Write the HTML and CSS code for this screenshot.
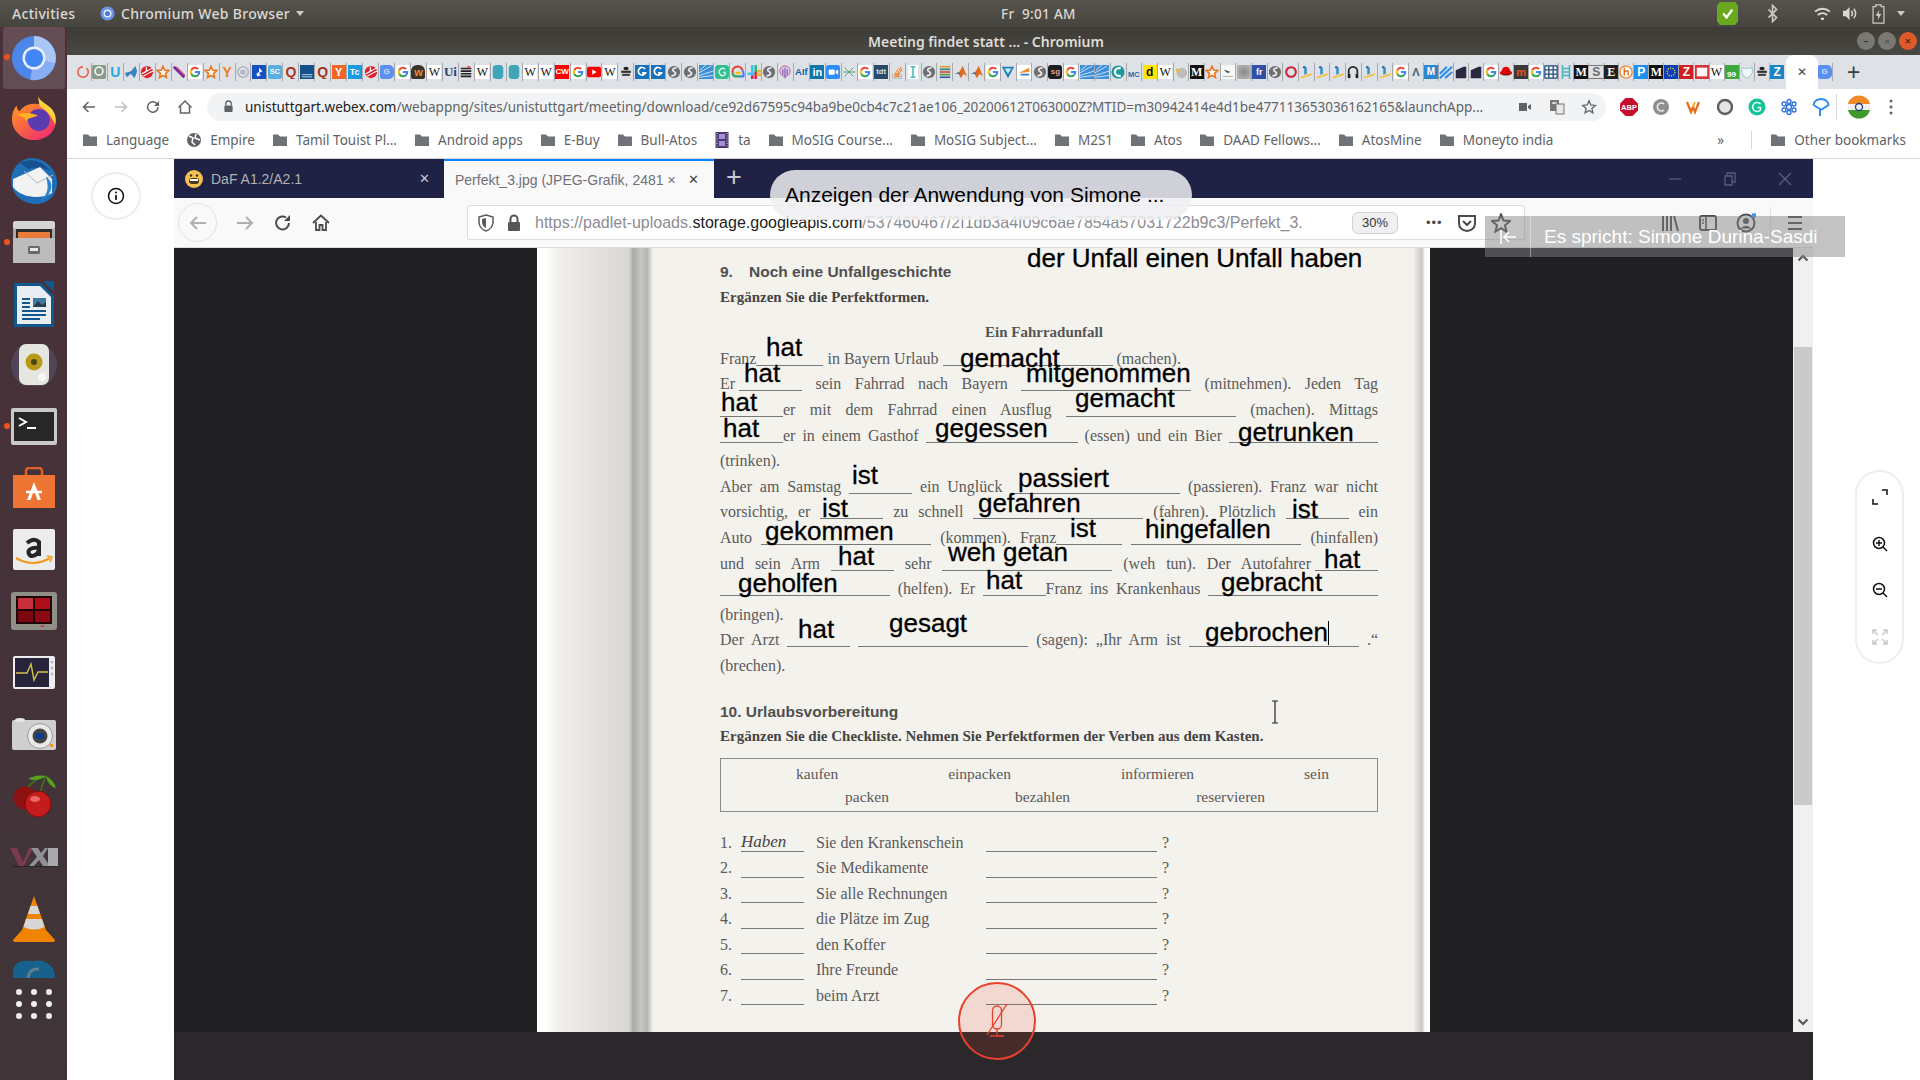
FILE: index.html
```html
<!DOCTYPE html>
<html lang="en">
<head>
  <meta charset="UTF-8">
  <title>Meeting findet statt ... - Chromium</title>
  <link rel="stylesheet" href="styles.css">
</head>
<body>
  <!-- shared favicon shapes -->
  <svg class="sprite" aria-hidden="true">
    <symbol id="goog" viewBox="0 0 16 16"><rect width="16" height="16" rx="2" fill="#fff"/><g fill="none" stroke-width="2.4"><path d="M3.8 5.8A4.8 4.8 0 0 1 11.5 4.6" stroke="#ea4335"/><path d="M3.8 5.8A4.8 4.8 0 0 0 3.8 10.2" stroke="#fbbc05"/><path d="M3.8 10.2A4.8 4.8 0 0 0 11.5 11.5" stroke="#34a853"/><path d="M11.5 11.5A4.8 4.8 0 0 0 12.8 8H8" stroke="#4285f4"/></g></symbol>
    <symbol id="globe" viewBox="0 0 16 16"><circle cx="8" cy="8" r="7" fill="#6d6f72"/><path d="M11 3.2C7 3 5 5.500 8 7.500S10 12 5 12.500" fill="none" stroke="#e8e8e8" stroke-width="2"/></symbol>
    <symbol id="star" viewBox="0 0 16 16"><path d="M8 1.500 9.800 5.800 14.500 6.300 11 9.500 12 14.300 8 11.800 4 14.300 5 9.500 1.500 6.300 6.200 5.800Z" fill="#fff6ea" stroke="#e8771f" stroke-width="1.800"/></symbol>
    <symbol id="ball" viewBox="0 0 16 16"><circle cx="8" cy="8" r="7" fill="#d9232f"/><path d="M2 10C7 8 10 5 14 4M3 13C8 11 11 8 15 7M7 2C8 5 8 6 6 8" fill="none" stroke="#fff" stroke-width="1.200"/></symbol>
    <symbol id="py" viewBox="0 0 16 16"><path d="M1 14 15 9 14 12 3 15Z" fill="#f0c040"/><path d="M6 2 9 3 9 10 6 11Z" fill="#3a8fd0"/><circle cx="6" cy="2.500" r="1.500" fill="#1c6fb0"/></symbol>
    <symbol id="rays" viewBox="0 0 16 16"><rect width="16" height="16" fill="#3f8fd8"/><path d="M0 14 16 12M0 12 16 7M0 9 14 1M1 6 8 0" stroke="#d8ecfa" stroke-width="1"/></symbol>
    <symbol id="doc" viewBox="0 0 16 16"><path d="M2 6 11 2H14V15H2Z" fill="#2b2740"/></symbol>
    <symbol id="folder" viewBox="0 0 16 16"><path d="M1 2.500H6L8 4.500H15V14H1Z" fill="#6f7276"/></symbol>
    <symbol id="pill" viewBox="0 0 16 16"><rect x="2" width="12" height="16" rx="4" fill="#3fa5b8"/></symbol>
    <symbol id="bee" viewBox="0 0 16 16"><ellipse cx="8" cy="4" rx="3" ry="2" fill="#222"/><rect x="2.500" y="6.500" width="11" height="2.500" fill="#333"/><rect x="3.500" y="10" width="9" height="2.500" fill="#444"/></symbol>
    <symbol id="gblue" viewBox="0 0 16 16"><rect width="16" height="16" fill="#1672bd"/><path d="M11.500 4.500A4.300 4.300 0 1 0 12 9H8" fill="none" stroke="#fff" stroke-width="2"/></symbol>
    <symbol id="matlab" viewBox="0 0 16 16"><path d="M1 10 6 8 10 1 15 13 11 10 8 15 5 10Z" fill="#e06a1a"/><path d="M1 10 6 8 8 11 5 10Z" fill="#3f78b8"/></symbol>
  </svg>

  <header class="topbar">
    <span class="activities">Activities</span>
    <span class="appmenu">
      <svg class="appmenu-ico" viewBox="0 0 16 16"><circle cx="8" cy="8" r="7.500" fill="#6b94e6"/><circle cx="8" cy="8" r="3.500" fill="#4a7fe0" stroke="#e6eefc" stroke-width="1.500"/></svg>
      Chromium Web Browser
      <i class="caret"></i>
    </span>
    <span class="clock">Fr &nbsp;9:01 AM</span>
    <span class="tray">
      <svg class="tray-check" viewBox="0 0 22 24"><path d="M3 0H19L22 4V20L19 24H3L0 20V4Z" fill="#6aa81e"/><path d="M6.500 12 10 16 16 8" fill="none" stroke="#fff" stroke-width="2.400"/></svg>
      <svg class="tray-bt" viewBox="0 0 16 22"><path d="M3 6 13 16 8 21V1L13 6 3 16" fill="none" stroke="#c9c7c1" stroke-width="2"/></svg>
      <svg class="tray-wifi" viewBox="0 0 18 16"><path d="M1 6A12 12 0 0 1 17 6M4 9.500A8 8 0 0 1 14 9.500" fill="none" stroke="#d9d7d2" stroke-width="2"/><path d="M7 12.500H11L10 15H8Z" fill="#e8e6e2"/></svg>
      <svg class="tray-vol" viewBox="0 0 18 16"><path d="M1 5H4L8 1V15L4 11H1Z" fill="#d9d7d2"/><path d="M10 5C11.500 7 11.500 9 10 11M12.500 3C15 6 15 10 12.500 13" fill="none" stroke="#d9d7d2" stroke-width="1.600"/></svg>
      <svg class="tray-bat" viewBox="0 0 14 22"><path d="M4 1H10V3H13V21H1V3H4Z" fill="none" stroke="#c9c7c1" stroke-width="1.400"/><path d="M8 6 4 13H7L6 18 10 11H7Z" fill="#d9d7d2"/></svg>
      <i class="caret"></i>
    </span>
  </header>

  <div class="desk">
    <nav class="dock">
      <a class="dock-item active">
        <svg width="46" height="46" viewBox="0 0 48 48"><circle cx="24" cy="24" r="23" fill="#4b86e8"/><path d="M24 1A23 23 0 0 1 46 30L24 24Z" fill="#a9c6f7"/><path d="M46 30A23 23 0 0 1 20 47L24 24Z" fill="#88aff3"/><circle cx="24" cy="24" r="12" fill="#e9f0fd"/><circle cx="24" cy="24" r="9.500" fill="#4285f4"/></svg>
      </a>
      <a class="dock-item">
        <svg width="46" height="46" viewBox="0 0 48 48"><defs><linearGradient id="fx" x1="0" y1="0" x2="1" y2="1"><stop offset="0" stop-color="#ff9a1f"/><stop offset="1" stop-color="#f01f78"/></linearGradient></defs><path d="M24 46C11 46 1 36 1 24C1 18 3 13 6 10C6 13 7 15 9 16C12 11 18 8 24 8C34 8 47 12 47 25C47 37 37 46 24 46Z" fill="url(#fx)"/><path d="M28 0C30 6 38 8 43 14C47 20 47 26 46 30C42 20 36 14 30 11Z" fill="#ffd43a"/><circle cx="29" cy="25" r="11.500" fill="#5a3bb0"/><path d="M6 20C14 16 22 18 28 20C24 23 18 22 16 26C14 22 10 20 6 20Z" fill="#ffb31f"/></svg>
      </a>
      <a class="dock-item">
        <svg width="48" height="48" viewBox="0 0 48 48"><path d="M20 1C34 0 47 12 47 26C47 38 38 47 26 47C14 47 1 38 1 24C1 12 9 3 20 1Z" fill="#1f6fb8"/><path d="M10 6C20 0 34 4 40 14C34 10 24 10 18 12Z" fill="#17508e"/><path d="M3 22 30 10 42 22 42 36C32 42 12 42 3 30Z" fill="#f3f3f3"/><path d="M14 14 27 26 43 18" fill="none" stroke="#b5b5b5" stroke-width="1"/><path d="M36 20C44 24 44 38 30 44C40 36 38 28 36 20Z" fill="#2e86cf"/></svg>
      </a>
      <a class="dock-item">
        <svg width="42" height="42" viewBox="0 0 42 42"><rect width="42" height="42" rx="3" fill="#a9a9a7"/><rect width="42" height="8" rx="3" fill="#d5d5d3"/><rect x="3" y="8" width="36" height="9" fill="#2b2b2b"/><rect x="5" y="11" width="32" height="7" fill="#ec7a3a"/><rect x="0" y="17" width="42" height="25" fill="#bcbcba"/><rect x="15" y="25" width="12" height="8" rx="1.500" fill="#6a6a6a"/><rect x="17" y="27" width="8" height="3" fill="#e8e8e8"/></svg>
      </a>
      <a class="dock-item">
        <svg width="40" height="46" viewBox="0 0 40 46"><path d="M0 2H27L40 15V46H0Z" fill="#10588f"/><path d="M3 5H26L37 16V43H3Z" fill="#e9eef2"/><path d="M29 0H40V11Z" fill="#10588f"/><path d="M8 18H16M8 22H16M8 26H16M8 30H32M8 34H32M8 38H26" stroke="#10588f" stroke-width="1.800"/><rect x="19" y="17" width="13" height="9" fill="#3e7aa8"/><path d="M19 26 24 20 28 24 32 21V26Z" fill="#2b3d4a"/></svg>
      </a>
      <a class="dock-item">
        <svg width="48" height="42" viewBox="0 0 48 42"><circle cx="24" cy="21" r="23" fill="#5a5470" opacity=".55"/><rect x="9" y="0" width="30" height="41" rx="7" fill="#e6e6e0"/><circle cx="24" cy="18" r="8.500" fill="#b89a18"/><circle cx="24" cy="18" r="3" fill="#4a4510"/><circle cx="32" cy="33" r="4" fill="#f6f6f2"/></svg>
      </a>
      <a class="dock-item">
        <svg width="46" height="37" viewBox="0 0 46 37"><rect width="46" height="37" rx="2" fill="#c9c9c7"/><rect x="3" y="4" width="40" height="29" fill="#272727"/><path d="M8 10 15 14 8 18" fill="none" stroke="#fff" stroke-width="2"/><path d="M16 20H25" stroke="#fff" stroke-width="2"/></svg>
      </a>
      <a class="dock-item">
        <svg width="42" height="42" viewBox="0 0 42 42"><path d="M13 8V4Q13 1 16 1H26Q29 1 29 4V8" fill="none" stroke="#d8622a" stroke-width="2.500"/><path d="M0 8H42V41H0Z" fill="#ee7434"/><path d="M21 15 28 33H24.500L21 23 17.500 33H14Z" fill="#fff"/><path d="M13 25H29" stroke="#fff" stroke-width="2.500"/></svg>
      </a>
      <a class="dock-item">
        <svg width="42" height="41" viewBox="0 0 42 41"><rect width="42" height="41" rx="2" fill="#ececec"/><path d="M14 14Q21 8 26 13V27M26 19C18 18 14 21 16 25S25 26 26 21" fill="none" stroke="#262626" stroke-width="4"/><path d="M3 29Q20 39 37 29" fill="none" stroke="#f19a1c" stroke-width="2.200"/><path d="M34 27 39 28 37 33" fill="none" stroke="#f19a1c" stroke-width="1.500"/></svg>
      </a>
      <a class="dock-item">
        <svg width="46" height="38" viewBox="0 0 46 38"><rect width="46" height="38" rx="3" fill="#8f8f88"/><rect x="5" y="4" width="36" height="28" fill="#1d0508"/><rect x="7" y="6" width="15" height="11" fill="#c9313a"/><rect x="24" y="6" width="15" height="11" fill="#b00e18"/><rect x="7" y="19" width="15" height="11" fill="#7c0710"/><rect x="24" y="19" width="15" height="11" fill="#8f0812"/><rect x="30" y="33" width="3" height="2" fill="#e33"/></svg>
      </a>
      <a class="dock-item">
        <svg width="42" height="33" viewBox="0 0 42 33"><rect width="42" height="33" rx="2" fill="#eee"/><rect x="2" y="2" width="34" height="29" fill="#27233a"/><path d="M3 17H14L18 8 21 24 25 16H35" fill="none" stroke="#d8c24a" stroke-width="1.400"/><circle cx="39" cy="6" r="1.500" fill="#bbb"/><circle cx="39" cy="12" r="1.500" fill="#bbb"/><circle cx="39" cy="18" r="1.500" fill="#bbb"/></svg>
      </a>
      <a class="dock-item">
        <svg width="44" height="32" viewBox="0 0 44 32"><rect y="2" width="44" height="30" rx="2" fill="#cfcfcf"/><ellipse cx="8" cy="2" rx="5" ry="2" fill="#e6e6e6"/><circle cx="28" cy="18" r="12.500" fill="#e9e9e9" stroke="#999"/><circle cx="28" cy="18" r="7.500" fill="#444"/><rect x="24" y="15" width="8" height="6" fill="#0c3d8a"/><rect x="38" y="26" width="3" height="3" fill="#e89a2a"/></svg>
      </a>
      <a class="dock-item">
        <svg width="44" height="44" viewBox="0 0 44 44"><path d="M14 16Q22 4 34 2M28 20Q30 10 34 2" fill="none" stroke="#3c7a18" stroke-width="1.600"/><path d="M16 5Q24 0 34 2Q26 8 16 5Z" fill="#58a020"/><path d="M34 2Q42 6 44 14Q36 12 34 2Z" fill="#58a020"/><circle cx="13" cy="24" r="11.500" fill="#8c1212"/><circle cx="26" cy="30" r="13" fill="#c41c1c" stroke="#7d0d0d"/><ellipse cx="23" cy="25" rx="5" ry="3" fill="#e66"/></svg>
      </a>
      <a class="dock-item">
        <svg width="48" height="20" viewBox="0 0 48 20"><path d="M0 1H7L13 15 19 1H23L14 19H9Z" fill="#7a3a52"/><path d="M19 19 27 10 21 1H28L31 6 35 1H38L33 9 40 19H33L29 13 24 19Z" fill="#8f9195"/><path d="M38 1H43V19H38ZM43 1H48V19H43Z" fill="#a8a8ad"/><path d="M2 20H47" stroke="#222" stroke-width="1.500"/></svg>
      </a>
      <a class="dock-item">
        <svg width="42" height="46" viewBox="0 0 42 46"><path d="M21 0 33 34 42 44Q42 46 40 46H2Q0 46 0 44L9 34Z" fill="#f08400"/><path d="M17.500 10H24.500L27 18H15ZM13 23H29L31.500 31Q21 36 10.500 31Z" fill="#d7d7d7"/></svg>
      </a>
      <a class="dock-item skype">
        <svg width="42" height="18" viewBox="0 0 42 18"><path d="M0 18V14Q0 1 12 1Q15 0 20 1Q30-1 38 6Q42 10 42 18Z" fill="#17618d"/><path d="M15 18Q16 8 26 9" fill="none" stroke="#5f7f93" stroke-width="3"/></svg>
      </a>
      <a class="dock-grid">
        <i></i><i></i><i></i><i></i><i></i><i></i><i></i><i></i><i></i>
      </a>
    </nav>

    <main class="browser">
      <div class="titlebar">
        <span class="wintitle">Meeting findet statt ... - Chromium</span>
        <span class="winbtns">
          <i class="winbtn">–</i><i class="winbtn">▫</i><i class="winbtn closebtn">×</i>
        </span>
      </div>

      <div class="tabstrip">
        <div class="tabs tabs-a">
          <span class="t"><svg class="fi" viewBox="0 0 16 16"><path d="M8 2A6 6 0 1 0 12 3.500" fill="none" stroke="#e8593a" stroke-width="1.600"/></svg></span>
          <span class="t"><svg class="fi" viewBox="0 0 16 16"><rect width="16" height="16" rx="2" fill="#8b9a88"/><circle cx="8" cy="7" r="4.500" fill="none" stroke="#eee" stroke-width="2"/></svg></span>
          <span class="t"><b class="fl cyan">U</b></span>
          <span class="t"><svg class="fi" viewBox="0 0 16 16"><path d="M1 9 8 7 13 1 15 7 12 15 8 10 3 14Z" fill="#3b82c4"/></svg></span>
          <span class="t"><svg class="fi"><use href="#ball"/></svg></span>
          <span class="t"><svg class="fi"><use href="#star"/></svg></span>
          <span class="t"><svg class="fi" viewBox="0 0 16 16"><path d="M2 2 14 14" stroke="#7a2aa0" stroke-width="3"/><path d="M5 2 15 12" stroke="#d83050" stroke-width="1.200"/></svg></span>
          <span class="t"><svg class="fi"><use href="#goog"/></svg></span>
          <span class="t"><svg class="fi"><use href="#star"/></svg></span>
          <span class="t"><b class="fl orange big">Y</b></span>
          <span class="t"><svg class="fi" viewBox="0 0 16 16"><circle cx="8" cy="8" r="7" fill="#b4bac6"/><circle cx="8" cy="8" r="4" fill="none" stroke="#e8eaee" stroke-width="1.500"/></svg></span>
          <span class="t"><svg class="fi" viewBox="0 0 16 16"><rect width="16" height="16" fill="#1452c4"/><path d="M8 3 12 7 8 9 10 12 6 13 5 10 8 8Z" fill="#fff"/></svg></span>
          <span class="t"><b class="fl sc">SC</b></span>
          <span class="t"><b class="fl qred big">Q</b></span>
          <span class="t"><svg class="fi" viewBox="0 0 16 16"><rect width="16" height="16" fill="#14508c"/><path d="M2 11H14M2 13.500H14" stroke="#cfe0ee" stroke-width="1"/></svg></span>
          <span class="t"><b class="fl qred big">Q</b></span>
          <span class="t"><b class="fl ybox">Y</b></span>
          <span class="t"><b class="fl tc">Tc</b></span>
          <span class="t"><svg class="fi"><use href="#ball"/></svg></span>
          <span class="t"><b class="fl gtr">G</b></span>
          <span class="t"><svg class="fi"><use href="#goog"/></svg></span>
          <span class="t"><b class="fl wbrown">w</b></span>
          <span class="t"><b class="fl wiki">W</b></span>
          <span class="t"><b class="fl uibox">Ui</b></span>
          <span class="t"><svg class="fi" viewBox="0 0 16 16"><path d="M2 4H14M2 7H14M2 10H14M2 13H14" stroke="#222" stroke-width="1.800"/><path d="M11 1V4" stroke="#d33" stroke-width="2"/></svg></span>
          <span class="t"><b class="fl wiki">W</b></span>
          <span class="t"><svg class="fi"><use href="#pill"/></svg></span>
          <span class="t"><svg class="fi"><use href="#pill"/></svg></span>
          <span class="t"><b class="fl wiki">W</b></span>
          <span class="t"><b class="fl wiki">W</b></span>
          <span class="t"><b class="fl cw">CW</b></span>
          <span class="t"><svg class="fi"><use href="#goog"/></svg></span>
          <span class="t"><svg class="fi" viewBox="0 0 16 16"><rect y="2" width="16" height="12" rx="2" fill="#f00"/><path d="M6 5 11 8 6 11Z" fill="#fff"/></svg></span>
          <span class="t"><b class="fl wiki">W</b></span>
          <span class="t"><svg class="fi"><use href="#bee"/></svg></span>
          <span class="t"><svg class="fi"><use href="#gblue"/></svg></span>
          <span class="t"><svg class="fi"><use href="#gblue"/></svg></span>
          <span class="t"><svg class="fi"><use href="#globe"/></svg></span>
          <span class="t"><svg class="fi"><use href="#globe"/></svg></span>
          <span class="t"><svg class="fi"><use href="#rays"/></svg></span>
          <span class="t"><svg class="fi" viewBox="0 0 16 16"><rect width="16" height="16" rx="4" fill="#30c08f"/><path d="M11.500 5A4 4 0 1 0 11.500 11V8.500H9" fill="none" stroke="#e8fbf3" stroke-width="1.500"/></svg></span>
          <span class="t"><svg class="fi" viewBox="0 0 16 16"><path d="M2 9A5.500 5.500 0 0 1 13 6" fill="none" stroke="#ea4335" stroke-width="2.500"/><path d="M13 6Q15 9 14 13H9" fill="none" stroke="#4285f4" stroke-width="2.500"/><path d="M2 9Q2 13 6 13H9" fill="none" stroke="#34a853" stroke-width="2.500"/><path d="M5 9H11" stroke="#fbbc05" stroke-width="2.500"/></svg></span>
          <span class="t"><svg class="fi" viewBox="0 0 16 16"><path d="M6 1V7M2 10H8" stroke="#36c5f0" stroke-width="3" stroke-linecap="round"/><path d="M10 1V7" stroke="#2eb67d" stroke-width="3" stroke-linecap="round"/><path d="M6 13V15M10 9V15" stroke="#e01e5a" stroke-width="3" stroke-linecap="round"/><path d="M13 7H15M12 11H15" stroke="#ecb22e" stroke-width="3" stroke-linecap="round"/></svg></span>
          <span class="t"><svg class="fi"><use href="#globe"/></svg></span>
          <span class="t"><svg class="fi" viewBox="0 0 16 16"><circle cx="8" cy="7" r="6" fill="#d8c8e8" stroke="#c25a7a"/><path d="M8 3V15M5.500 5V11M10.500 5V11" stroke="#7a58b8" stroke-width="1.300"/></svg></span>
          <span class="t"><b class="fl aif">AIf</b></span>
          <span class="t"><b class="fl linkedin">in</b></span>
          <span class="t"><svg class="fi" viewBox="0 0 16 16"><rect width="16" height="16" rx="3" fill="#2d8cff"/><rect x="3" y="5" width="7" height="6" rx="1" fill="#fff"/><path d="M11 7 14 5V11L11 9Z" fill="#fff"/></svg></span>
          <span class="t"><svg class="fi" viewBox="0 0 16 16"><path d="M3 3C7 7 9 9 13 13M13 3C9 7 7 9 3 13M1 8H15" fill="none" stroke="#4c9a78" stroke-width="1"/></svg></span>
          <span class="t"><svg class="fi"><use href="#goog"/></svg></span>
          <span class="t"><b class="fl tdt">tdt</b></span>
          <span class="t"><svg class="fi" viewBox="0 0 16 16"><path d="M3 10V15H13V10" fill="none" stroke="#bcbbbb" stroke-width="1.500"/><path d="M5 13H11M5 11 11 11.500M5.500 9 11 10.500M7 6 11.500 9.500M9.500 3.500 12.500 8M12 2 13.500 7" stroke="#f48024" stroke-width="1.200"/></svg></span>
          <span class="t"><svg class="fi" viewBox="0 0 16 16"><rect x="2" width="12" height="16" fill="#fff"/><path d="M5 2H11M5 14H11M8 2V14" stroke="#4cc0c0" stroke-width="1.800"/></svg></span>
          <span class="t"><svg class="fi"><use href="#globe"/></svg></span>
          <span class="t"><svg class="fi" viewBox="0 0 16 16"><path d="M2 2H14" stroke="#e0a030" stroke-width="2"/><path d="M2 5H14" stroke="#2a8a8a" stroke-width="2"/><path d="M2 8H14" stroke="#d85040" stroke-width="2"/><path d="M2 11H14" stroke="#5a9a40" stroke-width="2"/><path d="M2 14H14" stroke="#3a60a0" stroke-width="2"/></svg></span>
          <span class="t"><svg class="fi"><use href="#matlab"/></svg></span>
          <span class="t"><svg class="fi"><use href="#matlab"/></svg></span>
        </div>
        <div class="tabs tabs-b">
          <span class="t"><svg class="fi"><use href="#goog"/></svg></span>
          <span class="t"><svg class="fi" viewBox="0 0 16 16"><path d="M1 2H15L8 15Z" fill="#1c7fb8"/><path d="M4 4H12L8 10Z" fill="#d8ecf6"/></svg></span>
          <span class="t"><svg class="fi" viewBox="0 0 16 16"><rect width="16" height="16" fill="#fff"/><path d="M14 3 2 9 14 8Z" fill="#f08a24"/><path d="M4 11H14" stroke="#3a7fc0" stroke-width="2"/></svg></span>
          <span class="t"><svg class="fi"><use href="#globe"/></svg></span>
          <span class="t"><b class="fl sg">sg</b></span>
          <span class="t"><svg class="fi"><use href="#goog"/></svg></span>
          <span class="t"><svg class="fi"><use href="#rays"/></svg></span>
          <span class="t"><svg class="fi"><use href="#rays"/></svg></span>
          <span class="t"><svg class="fi" viewBox="0 0 16 16"><circle cx="8" cy="8" r="7.500" fill="#1e9a9a"/><path d="M11 4A4.500 4.500 0 1 0 11 12" fill="none" stroke="#fff" stroke-width="2.500"/></svg></span>
          <span class="t"><b class="fl mc">MC</b></span>
          <span class="t"><b class="fl dbox">d</b></span>
          <span class="t"><b class="fl wiki">W</b></span>
          <span class="t"><svg class="fi" viewBox="0 0 16 16"><circle cx="9" cy="9" r="6" fill="#bdbdbd"/><path d="M2 3 8 8 3 9Z" fill="#e8b93a"/></svg></span>
          <span class="t"><b class="fl medium">M</b></span>
          <span class="t"><svg class="fi"><use href="#star"/></svg></span>
          <span class="t"><svg class="fi" viewBox="0 0 16 16"><rect width="16" height="16" fill="#f7f7f5"/><path d="M3 5 11 8 7 9Z" fill="#444"/><path d="M2 13H14" stroke="#aaa"/></svg></span>
          <span class="t"><i class="blurbox"></i></span>
          <span class="t"><b class="fl frbox">fr</b></span>
          <span class="t"><svg class="fi"><use href="#globe"/></svg></span>
          <span class="t"><svg class="fi" viewBox="0 0 16 16"><circle cx="8" cy="8" r="5.500" fill="none" stroke="#cf2035" stroke-width="2.400"/></svg></span>
          <span class="t"><svg class="fi"><use href="#py"/></svg></span>
          <span class="t"><svg class="fi"><use href="#py"/></svg></span>
          <span class="t"><svg class="fi"><use href="#py"/></svg></span>
          <span class="t"><svg class="fi" viewBox="0 0 16 16"><path d="M3 10V7A5 5 0 0 1 13 7V10" fill="none" stroke="#222" stroke-width="2"/><rect x="2" y="10" width="3" height="5" fill="#222"/><rect x="11" y="10" width="3" height="5" fill="#222"/></svg></span>
          <span class="t"><svg class="fi"><use href="#py"/></svg></span>
          <span class="t"><svg class="fi"><use href="#py"/></svg></span>
          <span class="t"><svg class="fi"><use href="#goog"/></svg></span>
        </div>
        <div class="tabs tabs-c">
          <span class="t"><b class="fl lam">Λ</b></span>
          <span class="t"><b class="fl mblue">M</b></span>
          <span class="t"><svg class="fi" viewBox="0 0 16 16"><path d="M1 10 9 2M1 15 15 2M7 15 15 8" stroke="#2e8fe8" stroke-width="2.400"/></svg></span>
          <span class="t"><svg class="fi"><use href="#doc"/></svg></span>
          <span class="t"><svg class="fi"><use href="#doc"/></svg></span>
          <span class="t"><svg class="fi"><use href="#goog"/></svg></span>
          <span class="t"><svg class="fi" viewBox="0 0 16 16"><path d="M3 7Q4 2 8 2Q12 2 13 7Z" fill="#e00"/><ellipse cx="8" cy="9" rx="7" ry="3" fill="#d00"/><path d="M4 11H12" stroke="#222"/></svg></span>
          <span class="t"><b class="fl mred">m</b></span>
          <span class="t"><svg class="fi"><use href="#goog"/></svg></span>
          <span class="t"><svg class="fi" viewBox="0 0 16 16"><rect x="1" y="1" width="14" height="14" fill="#f5f5f5" stroke="#28527e" stroke-width="1.500"/><path d="M5.500 1V15M10.500 1V15M1 5.500H15M1 10.500H15" stroke="#28527e" stroke-width="1.500"/></svg></span>
          <span class="t"><svg class="fi" viewBox="0 0 16 16"><path d="M4 0V16M12 0V16M4 4H12M4 8H12M4 12H12" stroke="#4cb4c0" stroke-width="1.800"/></svg></span>
          <span class="t"><b class="fl medium">M</b></span>
          <span class="t"><b class="fl sgrey">S</b></span>
          <span class="t"><b class="fl ebox">E</b></span>
          <span class="t"><svg class="fi" viewBox="0 0 16 16"><circle cx="8" cy="8" r="7" fill="#fff" stroke="#f08a30" stroke-width="1.600"/><path d="M6 3V12M6 8Q10 5 10.500 8V12" fill="none" stroke="#e86a20" stroke-width="1.600"/></svg></span>
          <span class="t"><b class="fl pbox">P</b></span>
          <span class="t"><b class="fl medium">M</b></span>
          <span class="t"><svg class="fi" viewBox="0 0 16 16"><rect width="16" height="16" fill="#0e3fb8"/><circle cx="8" cy="8" r="4.500" fill="none" stroke="#ffdc30" stroke-width="1.400" stroke-dasharray="1.400 1.400"/></svg></span>
          <span class="t"><b class="fl zred">Z</b></span>
          <span class="t"><svg class="fi" viewBox="0 0 16 16"><rect width="16" height="16" fill="#d9303a"/><rect x="2" y="3" width="12" height="10" fill="#f6f6f6"/></svg></span>
          <span class="t"><b class="fl wiki">W</b></span>
          <span class="t"><b class="fl nn">99</b></span>
          <span class="t"><svg class="fi" viewBox="0 0 16 16"><path d="M2 3Q8 5 14 3V9Q12 14 8 15Q4 14 2 9Z" fill="#eef6f6" stroke="#8cc4c4"/></svg></span>
          <span class="t"><svg class="fi"><use href="#bee"/></svg></span>
          <span class="t"><b class="fl zblue">Z</b></span>
        </div>
        <span class="activetab">✕</span>
        <span class="t aftertab"><b class="fl gtr">G</b></span>
        <span class="newtab">+</span>
      </div>

      <div class="toolbar">
        <svg class="nav-ico" viewBox="0 0 16 16"><path d="M14 8H2.500M7.500 3 2.500 8 7.500 13" fill="none" stroke="#5f6368" stroke-width="1.500"/></svg>
        <svg class="nav-ico" viewBox="0 0 16 16"><path d="M2 8H13.500M8.500 3 13.500 8 8.500 13" fill="none" stroke="#bdc0c4" stroke-width="1.500"/></svg>
        <svg class="nav-ico" viewBox="0 0 16 16"><path d="M13 8A5.200 5.200 0 1 1 11.500 4.300L13.500 6.300" fill="none" stroke="#5f6368" stroke-width="1.500"/><path d="M14 2V7H9Z" fill="#5f6368"/></svg>
        <svg class="nav-ico" viewBox="0 0 16 16"><path d="M1.500 8.500 8 2 14.500 8.500M3.500 7.500V14H12.500V7.500" fill="none" stroke="#5f6368" stroke-width="1.500"/></svg>
        <div class="omnibox">
          <svg class="omni-lock" viewBox="0 0 12 14"><path d="M3 6V4A3 3 0 0 1 9 4V6" fill="none" stroke="#5f6368" stroke-width="1.400"/><rect x="1.500" y="6" width="9" height="7" rx="1" fill="#5f6368"/></svg>
          <span class="omni-url"><b>unistuttgart.webex.com</b>/webappng/sites/unistuttgart/meeting/download/ce92d67595c94ba9be0cb4c7c21ae106_20200612T063000Z?MTID=m30942414e4d1be47711365303616​2165&amp;launchApp...</span>
          <svg class="omni-ico" viewBox="0 0 16 16"><rect x="2" y="4" width="8" height="8" fill="#5f6368"/><path d="M11 7 14 5V11L11 9Z" fill="#5f6368"/></svg>
          <svg class="omni-ico" viewBox="0 0 16 16"><rect x="1" y="1" width="9" height="11" fill="#777"/><rect x="7" y="5" width="8" height="10" fill="#e8e8e8" stroke="#777"/><path d="M3 4H8M5 3V5" stroke="#fff"/></svg>
          <svg class="omni-ico" viewBox="0 0 16 16"><path d="M8 1.800 9.800 6 14.300 6.400 10.900 9.400 11.900 13.800 8 11.500 4.100 13.800 5.100 9.400 1.700 6.400 6.200 6Z" fill="none" stroke="#5f6368" stroke-width="1.300"/></svg>
        </div>
        <div class="extensions">
          <svg class="ext abp" viewBox="0 0 18 18"><path d="M5.500 0H12.500L18 5.500V12.500L12.500 18H5.500L0 12.500V5.500Z" fill="#c70d2c"/><text x="9" y="12" text-anchor="middle" font-size="7.500" font-weight="700" font-family="Liberation Sans" fill="#fff">ABP</text></svg>
          <svg class="ext" viewBox="0 0 18 18"><circle cx="9" cy="9" r="8" fill="#8d8f92"/><path d="M12 6A4 4 0 1 0 12 12" fill="none" stroke="#eee" stroke-width="1.600"/></svg>
          <svg class="ext" viewBox="0 0 18 18"><path d="M3 4 7 14 9 9 11 14 15 4" fill="none" stroke="#e96a1b" stroke-width="2.200"/><path d="M9 9 11 4" stroke="#f0b030" stroke-width="2"/></svg>
          <svg class="ext" viewBox="0 0 18 18"><circle cx="9" cy="9" r="7" fill="#e4e4e4" stroke="#5d5d5d" stroke-width="2.400"/></svg>
          <svg class="ext" viewBox="0 0 18 18"><circle cx="9" cy="9" r="8.500" fill="#15c39a"/><path d="M12.500 6A4.500 4.500 0 1 0 12.500 12V9.500H9.500" fill="none" stroke="#e8fbf3" stroke-width="1.600"/></svg>
          <svg class="ext" viewBox="0 0 18 18"><g fill="none" stroke="#2a6fdc" stroke-width="1.300"><circle cx="9" cy="9" r="2.500"/><circle cx="9" cy="3.500" r="2"/><circle cx="9" cy="14.500" r="2"/><circle cx="4" cy="6" r="2"/><circle cx="14" cy="6" r="2"/><circle cx="4" cy="12" r="2"/><circle cx="14" cy="12" r="2"/></g></svg>
          <svg class="ext" viewBox="0 0 18 18"><path d="M1.500 7A7.500 6 0 0 1 16.500 7L9 12" fill="none" stroke="#2f8df0" stroke-width="2"/><path d="M1.500 7 8 11V18" fill="none" stroke="#2f8df0" stroke-width="2"/></svg>
          <i class="tool-sep"></i>
          <svg class="avatar" viewBox="0 0 24 24"><clipPath id="av"><circle cx="12" cy="12" r="11.500"/></clipPath><g clip-path="url(#av)"><rect width="24" height="9" fill="#f08a24"/><rect y="9" width="24" height="6" fill="#f1f1f1"/><rect y="15" width="24" height="9" fill="#3f9a2c"/><circle cx="12" cy="12" r="3.500" fill="none" stroke="#1a3b8a" stroke-width="1.300"/></g></svg>
          <svg class="dots" viewBox="0 0 4 16"><circle cx="2" cy="2" r="1.500" fill="#5f6368"/><circle cx="2" cy="8" r="1.500" fill="#5f6368"/><circle cx="2" cy="14" r="1.500" fill="#5f6368"/></svg>
        </div>
      </div>

      <div class="bookmarks">
        <span class="bm"><svg class="bm-ico"><use href="#folder"/></svg>Language</span>
        <span class="bm"><svg class="bm-ico" viewBox="0 0 16 16"><circle cx="8" cy="8" r="7" fill="#5f6368"/><path d="M3 4 7 6 6 10 9 13M10 2 9 6 14 8" fill="none" stroke="#fff" stroke-width="1.500"/></svg>Empire</span>
        <span class="bm"><svg class="bm-ico"><use href="#folder"/></svg>Tamil Touist Pl...</span>
        <span class="bm"><svg class="bm-ico"><use href="#folder"/></svg>Android apps</span>
        <span class="bm"><svg class="bm-ico"><use href="#folder"/></svg>E-Buy</span>
        <span class="bm"><svg class="bm-ico"><use href="#folder"/></svg>Bull-Atos</span>
        <span class="bm"><svg class="bm-ico" viewBox="0 0 16 16"><rect x="1.500" width="13" height="16" fill="#4a3a70"/><rect x="5" y="2" width="6" height="5" fill="#a890d8"/><rect x="5" y="9" width="6" height="5" fill="#a890d8"/><path d="M3 1V15M13 1V15" stroke="#ddd" stroke-dasharray="1 1.500"/></svg>ta</span>
        <span class="bm"><svg class="bm-ico"><use href="#folder"/></svg>MoSIG Course...</span>
        <span class="bm"><svg class="bm-ico"><use href="#folder"/></svg>MoSIG Subject...</span>
        <span class="bm"><svg class="bm-ico"><use href="#folder"/></svg>M2S1</span>
        <span class="bm"><svg class="bm-ico"><use href="#folder"/></svg>Atos</span>
        <span class="bm"><svg class="bm-ico"><use href="#folder"/></svg>DAAD Fellows...</span>
        <span class="bm"><svg class="bm-ico"><use href="#folder"/></svg>AtosMine</span>
        <span class="bm"><svg class="bm-ico"><use href="#folder"/></svg>Moneyto india</span>
        <span class="bm-more">»</span>
        <span class="bm bm-other"><svg class="bm-ico"><use href="#folder"/></svg>Other bookmarks</span>
      </div>

      <div class="viewport">
        <aside class="side-left">
          <span class="info"><svg viewBox="0 0 18 18"><circle cx="9" cy="9" r="7.500" fill="none" stroke="#111" stroke-width="1.500"/><path d="M9 8V13" stroke="#111" stroke-width="1.700"/><circle cx="9" cy="5.500" r="1" fill="#111"/></svg></span>
        </aside>

        <section class="share">
          <div class="ff-tabs">
            <div class="ff-tab">
              <svg class="ff-emoji" viewBox="0 0 18 18"><circle cx="9" cy="9" r="9" fill="#f2c14e"/><rect x="4" y="8" width="10" height="6" rx="3" fill="#4a3a1a"/><rect x="5" y="9" width="8" height="2" fill="#fff"/><circle cx="6" cy="5.500" r="1.200" fill="#333"/><circle cx="12" cy="5.500" r="1.200" fill="#333"/></svg>
              <span class="ff-tab-title">DaF A1.2/A2.1</span>
              <span class="ff-tab-x">✕</span>
            </div>
            <div class="ff-tab ff-tab-on">
              <span class="ff-tab-title">Perfekt_3.jpg (JPEG-Grafik, 2481 × 3</span>
              <span class="ff-tab-x">✕</span>
            </div>
            <span class="ff-plus">+</span>
            <span class="ff-wins">
              <svg viewBox="0 0 16 16"><path d="M2 8H14" stroke="#5a5e7a" stroke-width="1.300"/></svg>
              <svg viewBox="0 0 16 16"><path d="M5 5V2H13V11H10M3 5H10V14H3Z" fill="none" stroke="#5a5e7a" stroke-width="1.300"/></svg>
              <svg viewBox="0 0 16 16"><path d="M2 2 14 14M14 2 2 14" stroke="#5a5e7a" stroke-width="1.300"/></svg>
            </span>
          </div>

          <div class="ff-toolbar">
            <span class="ff-back"><svg viewBox="0 0 20 20"><path d="M18 10H3M9 4 3 10 9 16" fill="none" stroke="#b0b0b4" stroke-width="2"/></svg></span>
            <svg class="ff-ico" viewBox="0 0 20 20"><path d="M2 10H17M11 4 17 10 11 16" fill="none" stroke="#b0b0b4" stroke-width="2"/></svg>
            <svg class="ff-ico" viewBox="0 0 20 20"><path d="M16 10A6.500 6.500 0 1 1 13 4.500" fill="none" stroke="#4a4a4f" stroke-width="2"/><path d="M17 2V8H11Z" fill="#4a4a4f"/></svg>
            <svg class="ff-ico" viewBox="0 0 20 20"><path d="M2 10 10 2.500 18 10M5 9V17H8.500V12H11.500V17H15V9" fill="none" stroke="#4a4a4f" stroke-width="1.800"/></svg>
            <div class="ff-url">
              <svg class="ff-shield" viewBox="0 0 16 18"><path d="M8 1 15 3V9Q14 15 8 17Q2 15 1 9V3Z" fill="none" stroke="#5a5a5f" stroke-width="1.500"/><path d="M8 4V14Q4 12 4 8V5Z" fill="#5a5a5f"/></svg>
              <svg class="ff-lock" viewBox="0 0 14 18"><path d="M3.500 8V5A3.500 3.500 0 0 1 10.500 5V8" fill="none" stroke="#55555a" stroke-width="2"/><rect x="1" y="8" width="12" height="9" rx="1" fill="#55555a"/></svg>
              <span class="ff-addr">https://padlet-uploads.<b>storage.googleapis.com</b>/537460467/2f1db3a4f09c6ae7854a57031722b9c3/Perfekt_3.</span>
              <span class="ff-zoom">30%</span>
              <span class="ff-more">•••</span>
              <svg class="ff-ico-sm" viewBox="0 0 20 20"><path d="M2 3H18V10Q18 17 10 18Q2 17 2 10Z" fill="none" stroke="#4a4a4f" stroke-width="2"/><path d="M6 8 10 12 14 8" fill="none" stroke="#4a4a4f" stroke-width="2"/></svg>
              <svg class="ff-ico-sm" viewBox="0 0 20 20"><path d="M10 1.500 12.500 7.500 19 8 14 12.300 15.500 18.500 10 15.200 4.500 18.500 6 12.300 1 8 7.500 7.500Z" fill="none" stroke="#4a4a4f" stroke-width="2"/></svg>
            </div>
            <svg class="ff-ico ff-lib" viewBox="0 0 20 20"><path d="M3 3V18M7 3V18M11 3V18M14 3 18 18" stroke="#4a4a4f" stroke-width="2"/></svg>
            <svg class="ff-ico" viewBox="0 0 20 20"><rect x="2" y="3" width="16" height="14" rx="2" fill="none" stroke="#4a4a4f" stroke-width="2"/><path d="M8 3V17M4 7H6M4 10H6" stroke="#4a4a4f" stroke-width="1.600"/></svg>
            <svg class="ff-ico" viewBox="0 0 20 20"><circle cx="10" cy="10" r="8.500" fill="none" stroke="#4a4a4f" stroke-width="2"/><circle cx="10" cy="8" r="3" fill="#4a4a4f"/><path d="M4.500 15.500Q10 10 15.500 15.500" fill="#4a4a4f"/><circle cx="18" cy="2.500" r="2.500" fill="#3f9bf0"/></svg>
            <i class="ff-sep"></i>
            <svg class="ff-ico" viewBox="0 0 20 20"><path d="M3 4H17M3 10H17M3 16H17" stroke="#4a4a4f" stroke-width="2"/></svg>
          </div>

          <div class="ff-body">
            <div class="ff-canvas">
              <article class="sheet">
                <h2 class="ex-title"><span class="ex-num">9.</span>Noch eine Unfallgeschichte</h2>
                <p class="ex-task">Ergänzen Sie die Perfektformen.</p>
                <h3 class="story-title">Ein Fahrradunfall</h3>

                <p class="ln ragged">Franz<u class="b67"></u> in Bayern Urlaub <u class="b170"></u> (machen).</p>
                <p class="ln">Er<u class="b64 l3"></u> sein Fahrrad nach Bayern <u class="b170"></u> (mitnehmen). Jeden Tag</p>
                <p class="ln"><u class="b64"></u>er mit dem Fahrrad einen Ausflug <u class="b170"></u> (machen). Mittags</p>
                <p class="ln"><u class="b64"></u>er in einem Gasthof <u class="b152"></u> (essen) und ein Bier <u class="b149"></u></p>
                <p class="ln ragged">(trinken).</p>
                <p class="ln">Aber am Samstag <u class="b64"></u> ein Unglück <u class="b170"></u> (passieren). Franz war nicht</p>
                <p class="ln">vorsichtig, er <u class="b64"></u> zu schnell <u class="b170"></u> (fahren). Plötzlich <u class="b64"></u> ein</p>
                <p class="ln">Auto <u class="b170"></u> (kommen). Franz<u class="b66"></u> <u class="b170"></u> (hinfallen)</p>
                <p class="ln">und sein Arm <u class="b64"></u> sehr <u class="b170"></u> (weh tun). Der Autofahrer<u class="b64 l3"></u></p>
                <p class="ln"><u class="b170"></u> (helfen). Er <u class="b64"></u>Franz ins Krankenhaus <u class="b170"></u></p>
                <p class="ln ragged">(bringen).</p>
                <p class="ln">Der Arzt <u class="b64"></u> <u class="b170"></u> (sagen): „Ihr Arm ist <u class="b170"></u> .“</p>
                <p class="ln ragged">(brechen).</p>

                <h2 class="ex-title second">10. Urlaubsvorbereitung</h2>
                <p class="ex-task">Ergänzen Sie die Checkliste. Nehmen Sie Perfektformen der Verben aus dem Kasten.</p>

                <div class="verbs">
                  <div class="verbs-row row-a"><span>kaufen</span><span>einpacken</span><span>informieren</span><span>sein</span></div>
                  <div class="verbs-row row-b"><span>packen</span><span>bezahlen</span><span>reservieren</span></div>
                </div>

                <ol class="check">
                  <li><span>1.</span><u class="slot"><em class="hand">Haben</em></u><span class="ck-text">Sie den Krankenschein</span><u class="slot"></u><span class="ck-q">?</span></li>
                  <li><span>2.</span><u class="slot"></u><span class="ck-text">Sie Medikamente</span><u class="slot"></u><span class="ck-q">?</span></li>
                  <li><span>3.</span><u class="slot"></u><span class="ck-text">Sie alle Rechnungen</span><u class="slot"></u><span class="ck-q">?</span></li>
                  <li><span>4.</span><u class="slot"></u><span class="ck-text">die Plätze im Zug</span><u class="slot"></u><span class="ck-q">?</span></li>
                  <li><span>5.</span><u class="slot"></u><span class="ck-text">den Koffer</span><u class="slot"></u><span class="ck-q">?</span></li>
                  <li><span>6.</span><u class="slot"></u><span class="ck-text">Ihre Freunde</span><u class="slot"></u><span class="ck-q">?</span></li>
                  <li><span>7.</span><u class="slot"></u><span class="ck-text">beim Arzt</span><u class="slot"></u><span class="ck-q">?</span></li>
                </ol>

                <!-- typed answers lying on the scan -->
                <span class="ans a1">der Unfall einen Unfall haben</span>
                <span class="ans a2">hat</span>
                <span class="ans a3">gemacht</span>
                <span class="ans a4">hat</span>
                <span class="ans a5">mitgenommen</span>
                <span class="ans a6">hat</span>
                <span class="ans a7">gemacht</span>
                <span class="ans a8">hat</span>
                <span class="ans a9">gegessen</span>
                <span class="ans a10">getrunken</span>
                <span class="ans a11">ist</span>
                <span class="ans a12">passiert</span>
                <span class="ans a13">ist</span>
                <span class="ans a14">gefahren</span>
                <span class="ans a15">ist</span>
                <span class="ans a16">gekommen</span>
                <span class="ans a17">ist</span>
                <span class="ans a18">hingefallen</span>
                <span class="ans a19">hat</span>
                <span class="ans a20">weh getan</span>
                <span class="ans a21">hat</span>
                <span class="ans a22">geholfen</span>
                <span class="ans a23">hat</span>
                <span class="ans a24">gebracht</span>
                <span class="ans a25">hat</span>
                <span class="ans a26">gesagt</span>
                <span class="ans a27">gebrochen<i class="text-caret"></i></span>
              </article>
            </div>
            <div class="ff-scroll">
              <svg class="sc-arrow" viewBox="0 0 12 8"><path d="M1.500 6.500 6 2 10.500 6.500" fill="none" stroke="#555" stroke-width="2"/></svg>
              <i class="sc-thumb"></i>
              <svg class="sc-arrow" viewBox="0 0 12 8"><path d="M1.500 1.500 6 6 10.500 1.500" fill="none" stroke="#555" stroke-width="2"/></svg>
            </div>
          </div>
          <div class="ff-band"></div>

          <!-- webex overlays -->
          <div class="share-pill">Anzeigen der Anwendung von Simone ...</div>
          <div class="speaker">
            <svg class="speaker-arrow" viewBox="0 0 18 18"><path d="M2 2V16M17 9H5M10 4 5 9 10 14" fill="none" stroke="#fff" stroke-width="1.500"/></svg>
            <span class="speaker-text">Es spricht: Simone Durina-Sasdi</span>
          </div>
          <div class="mute">
            <svg viewBox="0 0 24 36"><g fill="none" stroke="#e8402c" stroke-width="1.300"><rect x="7.500" y="3" width="9" height="23" rx="4.500"/><path d="M12 26V33M5 33H19"/><path d="M2 32 22 1"/></g></svg>
          </div>
          <svg class="ibeam" viewBox="0 0 10 24"><path d="M2 1H8M2 23H8M5 1V23" stroke="#222" stroke-width="1.200" fill="none"/></svg>
        </section>

        <aside class="side-right">
          <div class="zoomtools">
            <svg viewBox="0 0 16 16"><path d="M10 1H15V6M1 10V15H6" fill="none" stroke="#111" stroke-width="1.500"/></svg>
            <svg viewBox="0 0 16 16"><circle cx="7" cy="7" r="5.500" fill="none" stroke="#111" stroke-width="1.500"/><path d="M4 7H10M7 4V10M11 11 15 15" stroke="#111" stroke-width="1.500"/></svg>
            <svg viewBox="0 0 16 16"><circle cx="7" cy="7" r="5.500" fill="none" stroke="#111" stroke-width="1.500"/><path d="M4 7H10M11 11 15 15" stroke="#111" stroke-width="1.500"/></svg>
            <svg viewBox="0 0 16 16"><path d="M1 5V1H5M11 1H15V5M1 11V15H5M11 15H15V11M2 2 6 6M14 2 10 6M2 14 6 10M14 14 10 10" fill="none" stroke="#c8c8c8" stroke-width="1.500"/></svg>
          </div>
        </aside>
      </div>
    </main>
  </div>
</body>
</html>
```

FILE: styles.css
```css
* {
  box-sizing: border-box;
}
html, body {
  margin: 0;
  height: 100%;
}
body {
  width: 1920px;
  height: 1080px;
  overflow: hidden;
  display: flex;
  flex-direction: column;
  font-family: "Noto Sans", sans-serif;
  background: #fff;
}
.sprite {
  position: absolute;
  width: 0;
  height: 0;
}

/* gnome top bar */
.topbar {
  height: 27px;
  flex: none;
  display: flex;
  align-items: center;
  position: relative;
  padding-left: 12px;
  background: linear-gradient(#57544c, #46443e);
  color: #dcd9d3;
  font-size: 14px;
  font-weight: 500;
  letter-spacing: .3px;
}
.activities {
  width: 88px;
}
.appmenu {
  display: flex;
  align-items: center;
  gap: 6px;
}
.appmenu-ico {
  width: 15px;
  height: 15px;
}
.caret {
  width: 0;
  height: 0;
  border: 4.500px solid transparent;
  border-top: 5px solid #cfccc6;
  border-bottom: 0;
  display: inline-block;
}
.clock {
  margin-left: 697px;
  font-size: 13.500px;
}
.tray {
  margin-left: auto;
  display: flex;
  align-items: center;
  padding-right: 15px;
}
.tray-check {
  width: 21px;
  height: 23px;
}
.tray-bt {
  width: 13px;
  height: 19px;
  margin-left: 28px;
}
.tray-wifi {
  width: 17px;
  height: 15px;
  margin-left: 35px;
}
.tray-vol {
  width: 17px;
  height: 15px;
  margin-left: 11px;
}
.tray-bat {
  width: 13px;
  height: 20px;
  margin-left: 13px;
}
.tray .caret {
  margin-left: 12px;
}

.desk {
  flex: 1;
  display: flex;
  min-height: 0;
}

/* dock */
.dock {
  width: 67px;
  flex: none;
  display: flex;
  flex-direction: column;
  align-items: center;
  padding-top: 0;
  background: linear-gradient(#4b3038, #3f3539);
  overflow: hidden;
}
.dock-item {
  width: 62px;
  height: 61.500px;
  flex: none;
  display: flex;
  align-items: center;
  justify-content: center;
  border-radius: 3px;
  position: relative;
}
.dock-item.active {
  background: rgba(255, 255, 255, .14);
}
.dock-item.active::before {
  content: "";
  position: absolute;
  left: 1px;
  top: 27px;
  width: 6px;
  height: 6px;
  border-radius: 50%;
  background: #e95420;
}
.dock-item:nth-child(4)::before,
.dock-item:nth-child(7)::before {
  content: "";
  position: absolute;
  left: 1px;
  top: 27px;
  width: 6px;
  height: 6px;
  border-radius: 50%;
  background: #e95420;
}
.skype {
  align-items: flex-start;
  height: 22px;
  margin-top: 10px;
}
.dock-grid {
  width: 36px;
  display: grid;
  grid-template-columns: repeat(3, 6px);
  gap: 6px;
  justify-content: space-between;
  margin-top: 7px;
}
.dock-grid i {
  width: 6px;
  height: 6px;
  border-radius: 50%;
  background: #eee;
}

.browser {
  flex: 1;
  display: flex;
  flex-direction: column;
  min-width: 0;
}

/* chromium frame */
.titlebar {
  height: 28px;
  flex: none;
  display: flex;
  align-items: center;
  background: linear-gradient(#3c3b36, #4a4843);
  color: #dedcd7;
  font-size: 14px;
  font-weight: 600;
  position: relative;
}
.wintitle {
  margin-left: 801px;
}
.winbtns {
  margin-left: auto;
  display: flex;
  gap: 3px;
  padding-right: 3px;
}
.winbtn {
  width: 18px;
  height: 18px;
  border-radius: 50%;
  background: #7a7873;
  color: #3b3a36;
  font-size: 11px;
  font-style: normal;
  line-height: 18px;
  text-align: center;
}
.closebtn {
  background: #df5a2a;
  color: #5b2010;
}

.tabstrip {
  height: 34px;
  flex: none;
  display: flex;
  align-items: center;
  padding-left: 9px;
  background: #dee1e6;
}
.tabs {
  display: flex;
  flex: none;
}
.t {
  height: 18px;
  display: flex;
  align-items: center;
  justify-content: center;
  border-right: 1px solid #a6a8ac;
  flex: none;
  width: 15.960px;
}
.tabs-b .t {
  width: 15.700px;
}
.tabs-c .t {
  width: 15.040px;
}
.tabs-c .t:last-child {
  border-right: 0;
}
.fi {
  width: 14px;
  height: 14px;
  flex: none;
}
.fl {
  width: 14px;
  height: 14px;
  display: block;
  font: 700 11px/14px "Liberation Sans", sans-serif;
  text-align: center;
  overflow: hidden;
  flex: none;
}
.big { font-size: 14px; }
.cyan { color: #28a8e0; font-size: 14px; }
.orange { color: #e8801f; }
.qred { color: #a8331c; }
.sc { background: #5aaee0; color: #fff; font-size: 7px; border-radius: 2px; }
.ybox { background: #f26522; color: #fff; }
.tc { background: #1b9ae0; color: #fff; font-size: 9px; }
.gtr { background: #5b8ff0; color: #cfe0fc; font-size: 8px; border-radius: 2px 5px 5px 2px; }
.wbrown { background: #3a342c; color: #f08a24; border-radius: 6px 6px 2px 2px; }
.wiki { background: #fff; color: #111; font: 400 12px/14px "Liberation Serif", serif; }
.uibox { color: #24406e; font: 700 13px/14px "Liberation Serif", serif; }
.cw { background: #f00; color: #fff; font-size: 8px; }
.aif { color: #1f5fa8; font-size: 9.500px; }
.linkedin { background: #0e76a8; color: #fff; font-size: 11px; }
.tdt { background: #2a4a6a; color: #d8e4ee; font-size: 7.500px; }
.sg { background: #1d1d1d; color: #e8a0a0; font-size: 8px; border-radius: 3px; }
.mc { color: #2a6aa8; font-size: 7.500px; line-height: 20px; }
.dbox { background: #ffe500; color: #111; font-size: 12px; border: 2px solid #ffe500; line-height: 10px; }
.medium { background: #111; color: #fff; font: 700 12px/14px "Liberation Serif", serif; }
.frbox { background: #2f4fa8; color: #fff; font-size: 9px; }
.lam { color: #4a5a6a; font-size: 11px; }
.mblue { background: #2e86cf; color: #fff; font-size: 10px; }
.mred { background: #3a3a3a; color: #e8501f; }
.sgrey { color: #6a6a6a; font-size: 12px; border-top: 1px solid #777; border-bottom: 1px solid #777; line-height: 12px; }
.ebox { background: #222; color: #fff; font: 700 12px/14px "Liberation Serif", serif; }
.pbox { background: #1e90f0; color: #fff; font-size: 12px; }
.zred { background: #d01e1e; color: #fff; font-size: 12px; }
.nn { background: #3aa83a; color: #fff; font-size: 8px; line-height: 20px; }
.zblue { background: #1e84c8; color: #fff; font-size: 12px; }
.blurbox {
  width: 14px;
  height: 14px;
  background: radial-gradient(#888, #bbb);
}
.activetab {
  width: 32px;
  height: 34px;
  margin-left: 1px;
  background: #fff;
  border-radius: 8px 8px 0 0;
  color: #444;
  font-size: 12px;
  line-height: 34px;
  text-align: center;
  flex: none;
}
.aftertab {
  width: 15px;
}
.newtab {
  margin-left: 14px;
  font-size: 24px;
  line-height: 24px;
  color: #3c4043;
}

.toolbar {
  height: 35px;
  flex: none;
  display: flex;
  align-items: center;
  padding-left: 14px;
  background: #fff;
}
.nav-ico {
  width: 16px;
  height: 16px;
  margin-right: 16px;
  flex: none;
}
.omnibox {
  width: 1399px;
  height: 28px;
  margin-left: -2px;
  display: flex;
  align-items: center;
  border-radius: 14px;
  background: #f1f3f4;
  padding: 0 9px 0 16px;
  font-size: 13.500px;
  flex: none;
}
.omni-lock {
  width: 11px;
  height: 13px;
  flex: none;
  margin-right: 11px;
}
.omni-url {
  flex: 1;
  min-width: 0;
  white-space: nowrap;
  overflow: hidden;
  color: #5f6368;
}
.omni-url b {
  font-weight: 400;
  color: #202124;
}
.omni-ico {
  width: 16px;
  height: 16px;
  margin-left: 16px;
  flex: none;
}
.extensions {
  display: flex;
  align-items: center;
  margin-left: 14px;
}
.ext {
  width: 18px;
  height: 18px;
  margin-right: 14px;
  flex: none;
}
.tool-sep {
  width: 1px;
  height: 26px;
  background: #d5d7da;
  margin: 0 10px 0 -8px;
}
.avatar {
  width: 24px;
  height: 26px;
}
.dots {
  width: 4px;
  height: 16px;
  margin-left: 18px;
}

.bookmarks {
  height: 35px;
  flex: none;
  display: flex;
  align-items: center;
  padding: 0 14px 2px 15px;
  gap: 17px;
  border-bottom: 1px solid #d6d6d6;
  color: #5f6368;
  font-size: 13.500px;
  background: #fff;
}
.bm {
  display: flex;
  align-items: center;
  gap: 8px;
  white-space: nowrap;
}
.bm-ico {
  width: 16px;
  height: 16px;
  flex: none;
}
.bm-more {
  margin-left: auto;
}
.bm-other {
  margin-left: 10px;
  padding-left: 18px;
  border-left: 1px solid #d6d6d6;
}

/* webex viewer */
.viewport {
  flex: 1;
  display: flex;
  min-height: 0;
}
.side-left {
  width: 107px;
  flex: none;
  padding: 13px 0 0 23.500px;
}
.info {
  width: 50px;
  height: 48px;
  display: flex;
  align-items: center;
  justify-content: center;
  border: 2px solid #eee;
  border-radius: 50%;
}
.info svg {
  width: 18px;
  height: 18px;
}
.side-right {
  width: 107px;
  flex: none;
  padding: 311px 0 0 42px;
}
.zoomtools {
  width: 49px;
  height: 194px;
  display: flex;
  flex-direction: column;
  align-items: center;
  justify-content: space-between;
  padding: 17px 0;
  border: 2px solid #eee;
  border-radius: 25px;
}
.zoomtools svg {
  width: 16px;
  height: 16px;
}
.share {
  width: 1639px;
  flex: none;
  display: flex;
  flex-direction: column;
  position: relative;
}

/* firefox inside the share */
.ff-tabs {
  height: 39px;
  flex: none;
  display: flex;
  background: #1f2145;
  color: #b1b1b3;
  font: 14px "Liberation Sans", sans-serif;
}
.ff-tab {
  width: 270px;
  display: flex;
  align-items: center;
  padding: 0 14px 0 11px;
}
.ff-emoji {
  width: 18px;
  height: 18px;
  margin-right: 8px;
  flex: none;
}
.ff-tab-title {
  flex: 1;
  white-space: nowrap;
  overflow: hidden;
}
.ff-tab-x {
  font-size: 13px;
  color: #c8c8d0;
}
.ff-tab-on {
  background: #f9f9fa;
  border-top: 2px solid #0a84ff;
  color: #707076;
  padding-right: 15px;
  gap: 10px;
}
.ff-tab-on .ff-tab-x {
  color: #444;
}
.ff-plus {
  width: 40px;
  text-align: center;
  font-size: 27px;
  line-height: 36px;
  color: #c8c8d4;
}
.ff-wins {
  margin-left: auto;
  display: flex;
  align-items: center;
  gap: 39px;
  padding-right: 20px;
}
.ff-wins svg {
  width: 16px;
  height: 16px;
}
.ff-toolbar {
  height: 50px;
  flex: none;
  display: flex;
  align-items: center;
  border-bottom: 1px solid #ddd;
  background: #f9f9fa;
  padding-left: 4px;
}
.ff-back {
  width: 39px;
  height: 39px;
  display: flex;
  align-items: center;
  justify-content: center;
  border: 1px solid #e2e2e4;
  border-radius: 50%;
  flex: none;
}
.ff-back svg {
  width: 20px;
  height: 20px;
}
.ff-ico {
  width: 20px;
  height: 20px;
  flex: none;
  margin-left: 18px;
}
.ff-url {
  width: 1058px;
  height: 35px;
  margin-left: 136px;
  flex: none;
  display: flex;
  align-items: center;
  background: #fff;
  border: 1px solid #ddd;
  border-radius: 2px;
  padding-left: 10px;
  color: #8c8c92;
  font: 16px "Liberation Sans", sans-serif;
}
.ff-shield {
  width: 16px;
  height: 18px;
  flex: none;
  margin-right: 10px;
}
.ff-lock {
  width: 14px;
  height: 18px;
  flex: none;
  margin-left: 3px;
  margin-right: 14px;
}
.ff-addr {
  width: 808px;
  flex: none;
  white-space: nowrap;
  overflow: hidden;
}
.ff-addr b {
  font-weight: 400;
  color: #222;
}
.ff-zoom {
  width: 46px;
  height: 22px;
  margin-left: 9px;
  flex: none;
  text-align: center;
  font-size: 13px;
  line-height: 20px;
  color: #333;
  background: #f0f0f2;
  border: 1px solid #d0d0d2;
  border-radius: 6px;
}
.ff-more {
  margin-left: 28px;
  font-size: 13px;
  letter-spacing: 1px;
  color: #4a4a4f;
}
.ff-ico-sm {
  width: 20px;
  height: 20px;
  flex: none;
  margin-left: 14px;
}
.ff-lib {
  margin-left: 135px;
}
.ff-sep {
  width: 1px;
  height: 32px;
  background: #e0e0e2;
  margin-left: 14px;
  margin-right: -4px;
}
.ff-body {
  flex: 1;
  min-height: 0;
  display: flex;
}
.ff-canvas {
  flex: 1;
  background: #212023;
  padding-left: 363px;
  overflow: hidden;
}
.ff-scroll {
  width: 20px;
  flex: none;
  display: flex;
  flex-direction: column;
  align-items: center;
  justify-content: space-between;
  padding: 6px 0;
  background: #f0f0f0;
}
.sc-arrow {
  width: 12px;
  height: 8px;
  flex: none;
}
.sc-thumb {
  width: 18px;
  height: 458px;
  margin-top: -129px;
  background: #cbcaca;
}
.ff-band {
  height: 48px;
  flex: none;
  background: #2a282b;
}

/* the scanned page */
.sheet {
  width: 893px;
  height: 784px;
  position: relative;
  padding: 11px 52px 0 183px;
  overflow: hidden;
  background:
    linear-gradient(90deg, #fff 0, #fff 8px, #f2f0ec 20px, #e3e1dd 60px, #d9d7d3 92px, #a9a9a7 96px, #c8c7c4 104px, #b5b5b3 110px, #f4f2ed 116px, #f4f2ed 876px, #c9c8c6 885px, #fdfdfd 888px);
  color: #5a5a5a;
  font: 16px/25.600px "Liberation Serif", serif;
}
.ex-title {
  margin: 0;
  font: 700 15.500px/25.600px "Liberation Sans", sans-serif;
  color: #4f4f4f;
}
.ex-num {
  display: inline-block;
  width: 29px;
}
.second {
  margin-top: 20px;
}
.ex-task {
  margin: 0;
  font-weight: 700;
  font-size: 15px;
  color: #444;
}
.story-title {
  margin: 10px 0 0 265px;
  font: 700 15px/25.600px "Liberation Serif", serif;
  color: #555;
}
.ln {
  margin: 0;
  text-align: justify;
  text-align-last: justify;
  white-space: nowrap;
}
.ragged {
  text-align-last: left;
}
.ln u {
  display: inline-block;
  height: 14px;
  border-bottom: 1.500px solid #777;
  vertical-align: -2px;
}
.b64 { width: 63px; }
.b66 { width: 66px; }
.b67 { width: 67px; }
.b149 { width: 149px; }
.b152 { width: 152px; }
.b170 { width: 170px; }
.l3 { margin-left: 4px; }
.verbs {
  height: 54px;
  margin-top: 8px;
  padding-top: 3px;
  border: 1.500px solid #8a8a88;
  font-size: 15.500px;
  line-height: 23px;
}
.verbs-row {
  display: flex;
  justify-content: space-between;
}
.row-a {
  padding: 0 48px 0 75px;
}
.row-b {
  padding: 0 112px 0 124px;
}
.check {
  margin: 18px 0 0;
  padding: 0;
  list-style: none;
}
.check li {
  height: 25.500px;
  display: grid;
  grid-template-columns: 21px 63px 182px 171px auto;
  align-items: center;
}
.slot {
  height: 20px;
  border-bottom: 1.500px solid #777;
  text-decoration: none;
}
.ck-text {
  padding-left: 12px;
}
.ck-q {
  padding-left: 5px;
}
.hand {
  display: block;
  font: italic 17px/20px "Liberation Serif", serif;
  color: #444;
}

/* typed answers */
.ans {
  position: absolute;
  font: 26px/30px "Liberation Sans", sans-serif;
  color: #000;
  white-space: nowrap;
  -webkit-text-stroke: .3px #000;
}
.a1 { left: 490px; top: -5px; }
.a2 { left: 229px; top: 84px; }
.a3 { left: 423px; top: 95px; }
.a4 { left: 207px; top: 110px; }
.a5 { left: 489px; top: 110px; }
.a6 { left: 184px; top: 139px; }
.a7 { left: 538px; top: 135px; }
.a8 { left: 186px; top: 165px; }
.a9 { left: 398px; top: 165px; }
.a10 { left: 701px; top: 169px; }
.a11 { left: 315px; top: 212px; }
.a12 { left: 481px; top: 215px; }
.a13 { left: 285px; top: 245px; }
.a14 { left: 441px; top: 240px; }
.a15 { left: 755px; top: 246px; }
.a16 { left: 228px; top: 268px; }
.a17 { left: 533px; top: 265px; }
.a18 { left: 608px; top: 266px; }
.a19 { left: 301px; top: 293px; }
.a20 { left: 411px; top: 289px; }
.a21 { left: 787px; top: 296px; }
.a22 { left: 201px; top: 320px; }
.a23 { left: 449px; top: 317px; }
.a24 { left: 684px; top: 319px; }
.a25 { left: 261px; top: 366px; }
.a26 { left: 352px; top: 360px; }
.a27 { left: 668px; top: 369px; }
.text-caret {
  display: inline-block;
  width: 1px;
  height: 24px;
  background: #000;
  vertical-align: -4px;
}

/* overlays on the share */
.share-pill {
  position: absolute;
  left: 596px;
  top: 11px;
  width: 422px;
  height: 50px;
  border-radius: 25px;
  padding-left: 15px;
  background: rgba(240, 240, 242, .85);
  color: #000;
  font: 21px/50px "Liberation Sans", sans-serif;
  white-space: nowrap;
}
.speaker {
  position: absolute;
  left: 1311px;
  top: 57px;
  width: 360px;
  height: 41px;
  display: flex;
  align-items: center;
  background: rgba(130, 130, 130, .48);
  color: #fff;
  font: 19px "Liberation Sans", sans-serif;
}
.speaker-arrow {
  width: 18px;
  height: 18px;
  margin: 0 13px 0 14px;
  flex: none;
}
.speaker-text {
  border-left: 1px solid rgba(255, 255, 255, .4);
  line-height: 41px;
  padding-left: 13px;
  white-space: nowrap;
}
.mute {
  position: absolute;
  left: 784px;
  top: 823px;
  width: 78px;
  height: 78px;
  display: flex;
  align-items: center;
  justify-content: center;
  border: 2px solid #e8402c;
  border-radius: 50%;
  background: rgba(225, 70, 50, .15);
}
.mute svg {
  width: 24px;
  height: 36px;
}
.ibeam {
  position: absolute;
  left: 1096px;
  top: 541px;
  width: 10px;
  height: 24px;
}
```
